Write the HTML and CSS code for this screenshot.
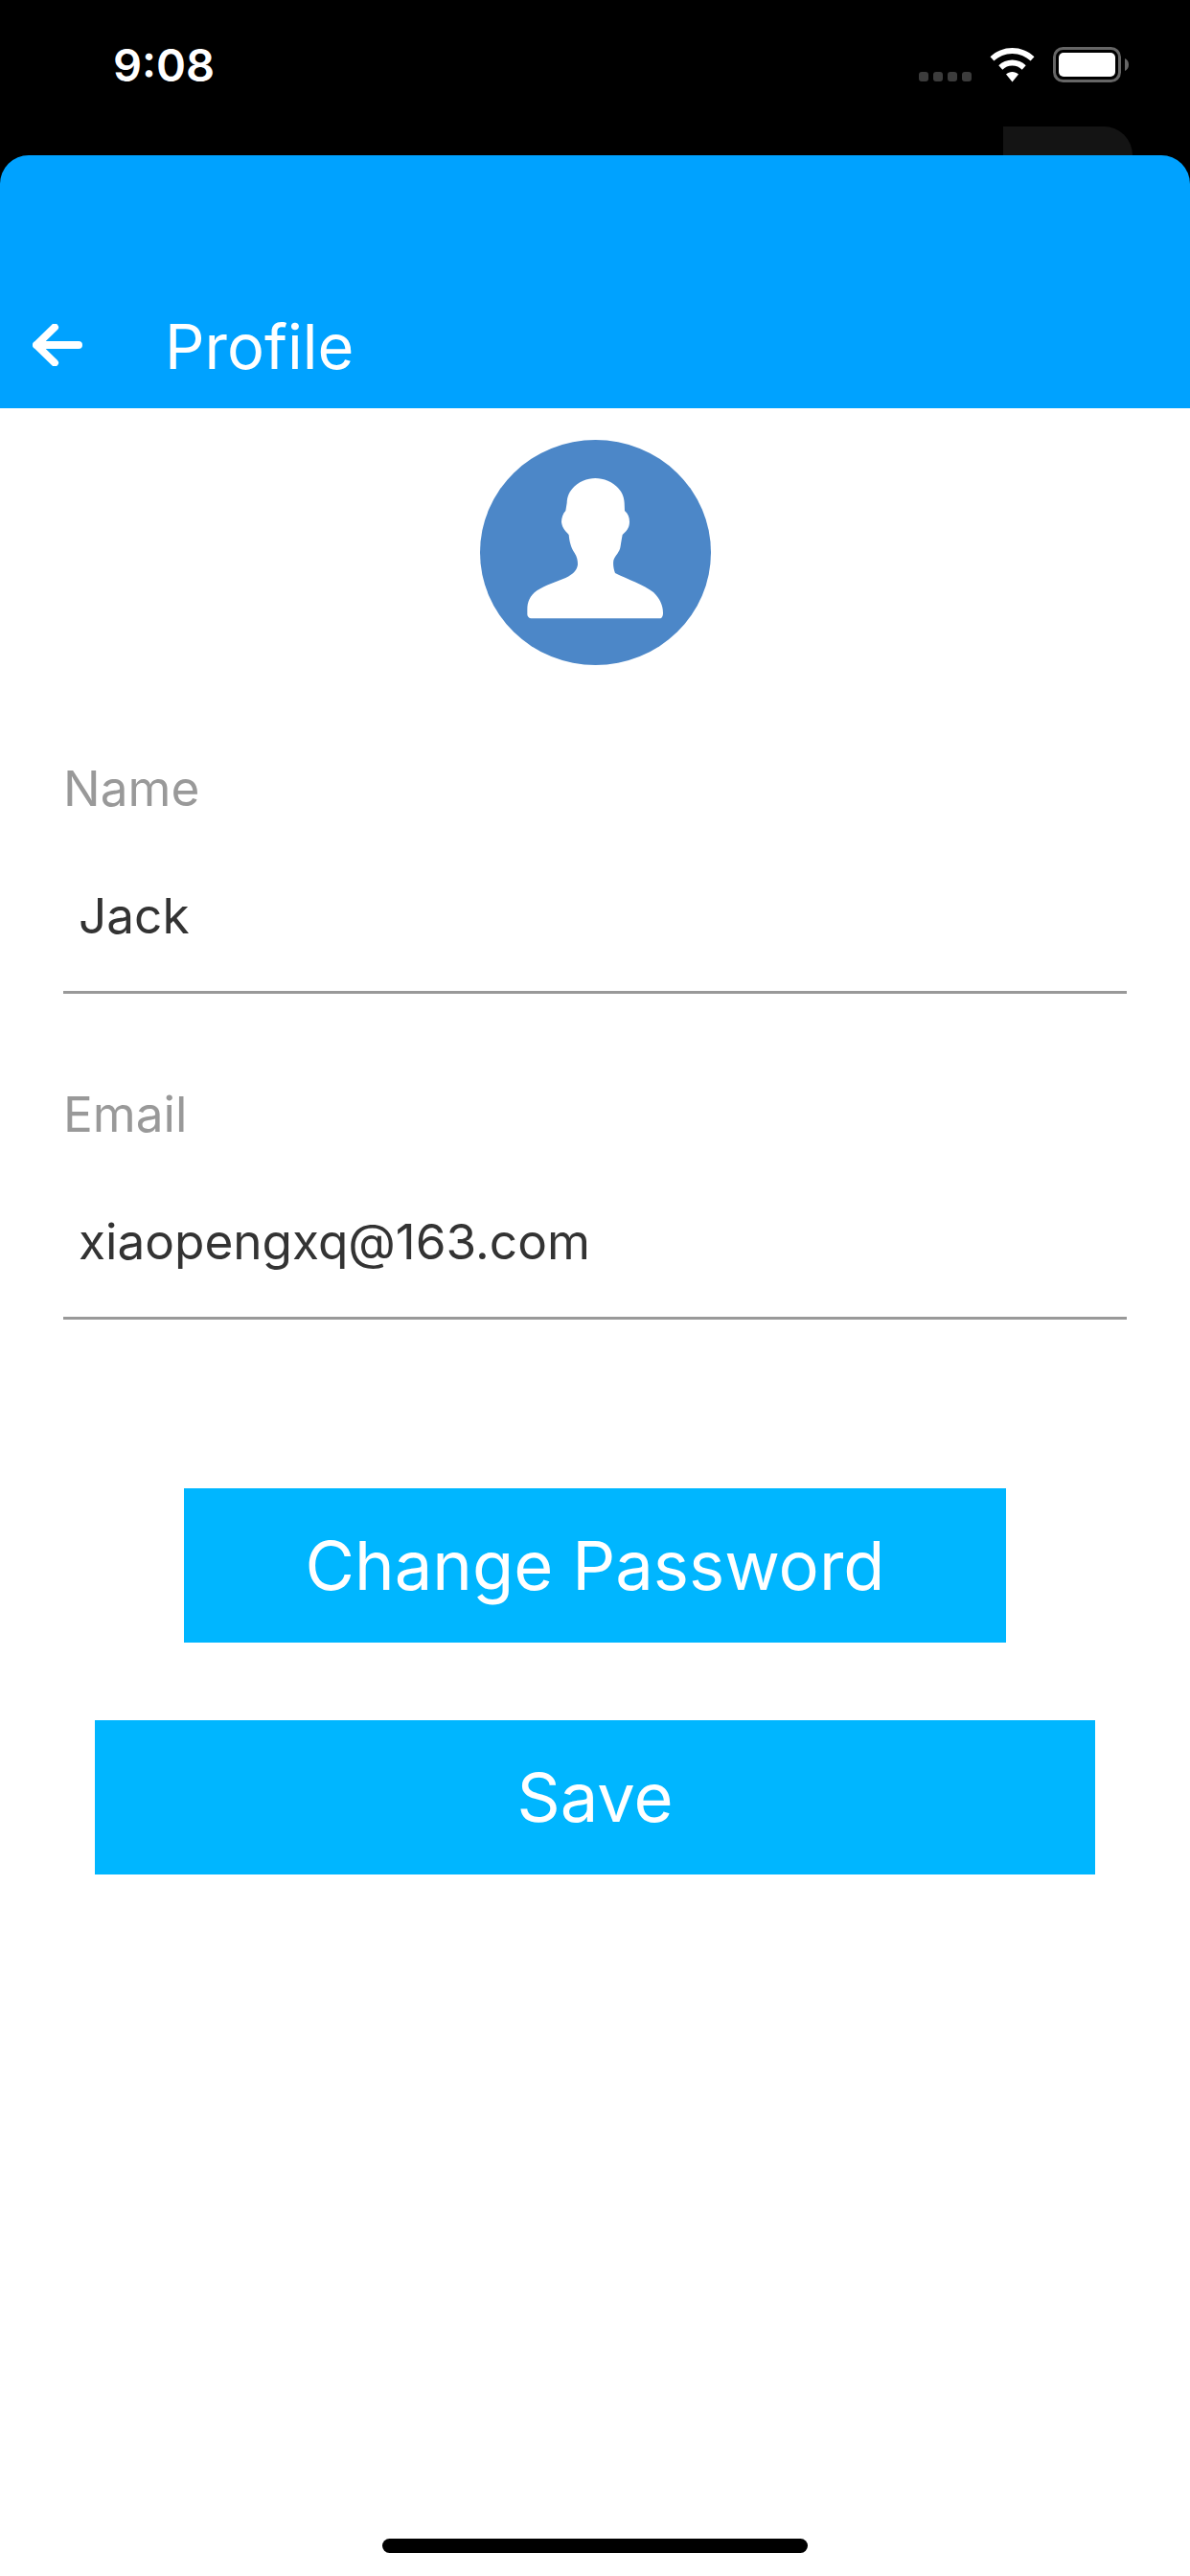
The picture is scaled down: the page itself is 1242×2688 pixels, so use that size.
FILE: index.html
```html
<!DOCTYPE html>
<html lang="en">
<head>
<meta charset="utf-8">
<title>Profile</title>
<link rel="stylesheet" href="styles.css">
</head>
<body>
<div class="screen">
  <div class="top">
    <div class="status">
      <span class="time">9:08</span>
      <div class="status-icons">
        <div class="signal"><i></i><i></i><i></i><i></i></div>
        <svg class="wifi" viewBox="0 0 47 36" aria-hidden="true"><path fill="#fff" d="M23.5 0C14.7 0 6.6 3.4 0.5 9.2L4.4 13.6C9.4 8.900 16.100 6 23.500 6S37.600 8.900 42.600 13.600L46.500 9.200C40.400 3.400 32.300 0 23.500 0Z"/><path fill="#fff" d="M23.500 12.500C18 12.500 13 14.700 9.300 18.200L13.300 22.700C15.900 20.200 19.500 18.600 23.500 18.600S31.100 20.200 33.700 22.700L37.700 18.200C34 14.700 29 12.500 23.500 12.500Z"/><path fill="#fff" d="M23.500 25C21 25 18.700 26 17 27.500L23.500 35.500L30 27.500C28.300 26 26 25 23.500 25Z"/></svg>
        <svg class="battery" viewBox="0 0 79 37" aria-hidden="true"><rect x="1.500" y="1.500" width="68" height="34" rx="9" fill="none" stroke="#666" stroke-width="3"/><rect x="6" y="6" width="59" height="25" rx="5" fill="#fff"/><path fill="#666" d="M75 12C77.500 13 79 15.500 79 18.500S77.500 24 75 25Z"/></svg>
      </div>
      <div class="peek"></div>
    </div>
    <header class="appbar">
      <svg class="back" viewBox="0 0 52 44" aria-hidden="true"><path d="M48 22H4M23 3.500L4 22L23 40.500" fill="none" stroke="#fff" stroke-width="8" stroke-linecap="round" stroke-linejoin="round"/></svg>
      <h1 class="title">Profile</h1>
    </header>
  </div>
  <main class="content">
    <svg class="avatar" viewBox="62 58 723 705" aria-hidden="true">
      <ellipse cx="423.500" cy="410.500" rx="361.500" ry="352.500" fill="#4c87c8"/>
      <path fill="#fff" d="M423 178C385 178 335 205 334 255L330 280C322 288 317 302 317 315C319 335 332 345 340 355C342 375 346 395 358 412C366 424 368 436 368 448C366 465 356 477 330 490C300 503 268 512 240 530C218 546 210 565 210 590L210 605C210 612 216 617 222 617L625 617C631 617 635 610 635 600C635 575 625 555 605 535C575 512 525 495 485 475C480 462 478 448 480 435C484 420 500 410 502 390C504 378 506 365 508 355C518 345 530 335 530 315C530 300 525 288 515 280L514 255C512 205 462 178 423 178Z"/>
    </svg>
    <div class="form">
      <div class="field">
        <div class="label">Name</div>
        <div class="value">Jack</div>
      </div>
      <div class="field">
        <div class="label">Email</div>
        <div class="value">xiaopengxq@163.com</div>
      </div>
    </div>
    <button class="btn btn-change" type="button">Change Password</button>
    <button class="btn btn-save" type="button">Save</button>
  </main>
  <div class="home-bar"></div>
</div>
</body>
</html>
```
FILE: styles.css
```css
* { box-sizing: border-box; }
html, body { margin: 0; padding: 0; }
body { background: #fff; font-family: Inter, "Liberation Sans", sans-serif; }

.screen {
  width: 1242px;
  height: 2688px;
  display: flex;
  flex-direction: column;
  overflow: hidden;
  background: #fff;
}

.top { background: #000; }

.status {
  position: relative;
  height: 162px;
  display: flex;
  justify-content: space-between;
  align-items: flex-start;
  padding: 40px 64px 0 118px;
}

.time {
  color: #fff;
  font-size: 47px;
  font-weight: 600;
  line-height: 56px;
}

.status-icons {
  display: flex;
  align-items: flex-end;
  gap: 19px;
  padding-top: 9px;
}

.signal {
  display: flex;
  gap: 5px;
  margin-bottom: 1px;
}
.signal i {
  width: 10px;
  height: 10px;
  border-radius: 3px;
  background: #3c3c3c;
}

.wifi { width: 47px; height: 36px; display: block; }
.battery { width: 79px; height: 37px; display: block; }

.peek {
  position: absolute;
  left: 1047px;
  top: 132px;
  width: 135px;
  height: 30px;
  background: #141414;
  border-top-right-radius: 30px;
}

.appbar {
  height: 264px;
  background: #00a2ff;
  border-radius: 30px 30px 0 0;
  display: flex;
  align-items: flex-end;
  padding: 0 0 0 34px;
}

.back {
  width: 52px;
  height: 44px;
  display: block;
  margin-bottom: 44px;
}

.title {
  margin: 0 0 24px 86px;
  color: #fff;
  font-size: 65px;
  font-weight: 380;
  line-height: 80px;
}

.content {
  display: flex;
  flex-direction: column;
  align-items: center;
  padding-top: 33px;
}

.avatar {
  width: 241px;
  height: 235px;
  display: block;
}

.form {
  width: 1110px;
  margin-top: 99px;
  display: flex;
  flex-direction: column;
  gap: 96px;
}

.field {
  border-bottom: 3px solid #999;
  padding-bottom: 50px;
}

.label {
  color: #999;
  font-size: 51.300px;
  font-weight: 400;
  line-height: 58px;
}

.value {
  margin-top: 75px;
  padding-left: 16px;
  color: #333;
  font-size: 51.300px;
  font-weight: 400;
  line-height: 58px;
}

.btn {
  border: 0;
  padding: 0;
  background: #00b6ff;
  color: #fff;
  font-family: inherit;
  font-size: 70.500px;
  font-weight: 380;
  height: 161px;
  display: block;
}

.btn-change { width: 858px; margin-top: 176px; }
.btn-save { width: 1044px; margin-top: 81px; }

.home-bar {
  width: 444px;
  height: 15px;
  border-radius: 8px;
  background: #000;
  margin: auto auto 24px;
}
```
